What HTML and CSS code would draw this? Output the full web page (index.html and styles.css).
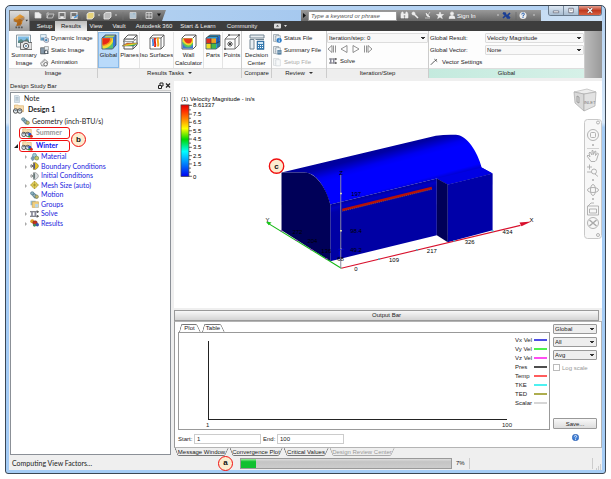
FILE: index.html
```html
<!DOCTYPE html>
<html lang="en">
<head>
<meta charset="utf-8">
<title>Design Study</title>
<link rel="stylesheet" href="styles.css">
</head>
<body>
<svg class="defs" aria-hidden="true">
  <defs>
    <linearGradient id="legend" x1="0" y1="0" x2="0" y2="1"><stop offset="0" stop-color="#e00000"/><stop offset=".08" stop-color="#ff2a00"/><stop offset=".22" stop-color="#ff9a00"/><stop offset=".33" stop-color="#ffff00"/><stop offset=".48" stop-color="#00d800"/><stop offset=".65" stop-color="#00ffff"/><stop offset=".8" stop-color="#0090ff"/><stop offset="1" stop-color="#0000f0"/></linearGradient>
    <linearGradient id="heat" x1="0" y1="0" x2="1" y2="1"><stop offset="0" stop-color="#e02010"/><stop offset=".35" stop-color="#f08a20"/><stop offset=".55" stop-color="#e8e030"/><stop offset=".72" stop-color="#30b860"/><stop offset="1" stop-color="#1848c8"/></linearGradient>
    <linearGradient id="gold" x1="0" y1="0" x2="1" y2="1"><stop offset="0" stop-color="#f7b955"/><stop offset="1" stop-color="#b4610c"/></linearGradient>
    <symbol id="i-global" viewBox="0 0 16 16"><path d="M1 4 4.500 1H15v10l-3.500 4H1z" fill="#3478d8" stroke="#444" stroke-width=".8"/><path d="M1.500 4.200h10.500v10.400H1.500z" fill="#58c070"/><path d="M1.500 4.200h10.500v3c-1 4-5 7-10.500 7.400z" fill="#f2dc30"/><path d="M1.500 4.200h9.500c0 4-4 7-9.500 8z" fill="#f49020"/><path d="M1.500 4.200h7.500c0 4-3 6-7.500 6.500z" fill="#e82818"/><path d="M3 3.500 5 1.500h9l-2 2z" fill="#b9d35a"/></symbol>
    <symbol id="i-planes" viewBox="0 0 16 16"><path d="M2 5 6 1h9v10l-4 4H2zM2 5h9v10M11 5l4-4" fill="none" stroke="#555" stroke-width="1"/><path d="m0 12 5-3h11l-4 3z" fill="url(#heat)" stroke="#555" stroke-width=".5"/><path d="m1 7.500 3-2h10l-3 2z" fill="#f8f8f8" stroke="#666" stroke-width=".6"/></symbol>
    <symbol id="i-iso" viewBox="0 0 16 16"><path d="M1 4 4 1h11v11l-3 3H1zM1 4h11v11M12 4l3-3" fill="#fff" stroke="#555" stroke-width=".9"/><path d="M5 4c-1 3 1 6 0 9h2c1-3-1-6 0-9z" fill="#e02818"/><path d="M8 3.500c-1 3 1 6 0 9h2c1-3-1-6 0-9z" fill="#f0a820"/><path d="M4 5c-1 2 1 4 0 7z" stroke="#2878d8" stroke-width="1"/></symbol>
    <symbol id="i-wall" viewBox="0 0 16 16"><path d="M1 4 4 1h11v11l-3 3H1zM12 4l3-3" fill="#fff" stroke="#444" stroke-width=".9"/><path d="M1.500 4.500H12V14.500H1.500z" fill="#3f78d0"/><path d="M1.500 4.500H12v6q-2 3-5 3-3 0-5.500-4z" fill="#54c464"/><path d="M1.500 4.500H12v4q-2 3-4.500 3t-6-4z" fill="#f2d82c"/><path d="M2.500 4.500H11q0 5-3.500 5t-5-5z" fill="#e8361c"/></symbol>
    <symbol id="i-parts" viewBox="0 0 16 16"><path d="M1 4 5 1h10v11l-4 3H1z" fill="#2c9bd0" stroke="#444" stroke-width=".8"/><path d="M1.400 4.400H6v5H1.400z" fill="#e22c1c"/><path d="M6 4.400h5v5H6z" fill="#f2a020"/><path d="M1.400 9.400H6v5H1.400z" fill="#f0dc28"/><path d="M6 9.400h5v5H6z" fill="#44b848"/><path d="m11 4.400 4-3V8l-4 2z" fill="#2468d0"/><path d="M1 9.400h10l4-2M6 4.400v10M3 2.500h10V13" fill="none" stroke="#333" stroke-width=".6"/></symbol>
    <symbol id="i-points" viewBox="0 0 16 16"><path d="M1 5 5 1h10v10l-4 4H1zM1 5h10v10M11 5l4-4" fill="none" stroke="#666" stroke-width=".9"/><path d="m4 8 4 4m0-4-4 4M6 7v6M3 10h6" stroke="#333" stroke-width=".8"/><circle cx="5" cy="1" r="1" fill="#555"/><circle cx="15" cy="1" r="1" fill="#555"/><circle cx="1" cy="15" r="1" fill="#555"/></symbol>
    <symbol id="i-decision" viewBox="0 0 16 16"><path d="M1 1h14v3H1zM1 5.500h4V15H1zM6.500 5.500H15" fill="#e8eef2" stroke="#738592" stroke-width="1"/><path d="M8 7h7v8.500H8z" fill="#3b7fb4" stroke="#285f8c" stroke-width=".5"/><path d="M9 8h5v2H9z" fill="#cfe6f5"/><path d="M9 11.500h5M9 13.500h5" stroke="#fff" stroke-dasharray="1 1"/></symbol>
    <symbol id="i-picture" viewBox="0 0 16 16"><path d="M.5 1h14v12H.5z" fill="#f2f6f8" stroke="#8a9aa4"/><path d="M2 2.500h11v5H2z" fill="#7fbde6"/><path d="m2 7 3-2 3 2 3-3 2 3v2H2z" fill="#5d8a86"/><path d="M4.500 8.500h2l1-1.500h4l1 1.500H16v7H4.500z" fill="#e4e4e4" stroke="#555" stroke-width=".8"/><circle cx="10" cy="12" r="2.600" fill="#fff" stroke="#555"/><circle cx="10" cy="12" r="1" fill="#5584a8"/></symbol>
    <symbol id="i-dyn" viewBox="0 0 16 16"><path d="M1 1h10v10H1z" fill="#e6f1f8" stroke="#6f8ca0"/><path d="M2 6h5v5H2z" fill="#5c98c2"/><path d="m9 6 6 2v6l-4 1.500L7 13V8z" fill="#d8e2e8" stroke="#557" stroke-width=".9"/><circle cx="11" cy="11" r="2" fill="#4488bb"/></symbol>
    <symbol id="i-static" viewBox="0 0 16 16"><path d="M1 3h9v11H1z" fill="#8598a8" stroke="#444"/><path d="M8 1h7v6H8z" fill="#e4edf2" stroke="#777"/><path d="M7 8h8v6H7z" fill="#4e5a64"/><circle cx="11" cy="11" r="2" fill="#fff"/></symbol>
    <symbol id="i-anim" viewBox="0 0 16 16"><path d="m1 9 7-7 6 5-2 7H3z" fill="#f0f0f0" stroke="#555"/><path d="m3 9 6-5M5 12l7-5" stroke="#777"/><circle cx="10" cy="11" r="3" fill="#fff" stroke="#555" stroke-width="1.300"/></symbol>
    <symbol id="i-file" viewBox="0 0 16 16"><path d="M1 1h9v12H1z" fill="#f6f8f9" stroke="#677782"/><path d="M3 4h5M3 7h5M3 10h4" stroke="#8b9aa5"/><path d="M5 3h8v11H5z" fill="#f0f5f8" stroke="#7a8a95"/></symbol>
    <symbol id="i-status" viewBox="0 0 16 16"><use href="#i-file"/><circle cx="11" cy="11" r="4.500" fill="#2b7cc8"/><path d="M11 8v1.500M11 10.500V14" stroke="#fff" stroke-width="1.500"/></symbol>
    <symbol id="i-summary" viewBox="0 0 16 16"><use href="#i-file"/><path d="M8 7h7v8H8z" fill="#3d6d92"/><path d="M9 9h5M9 12h5" stroke="#fff"/></symbol>
    <symbol id="i-solve" viewBox="0 0 16 12"><path d="M0 2h15M12 0l3 2-3 2M0 10h15M12 8l3 2-3 2" fill="none" stroke="#333" stroke-width="1.400"/><path d="M2 1h3v10H2zM8 1h3v10H8z" fill="#889"/></symbol>
    <symbol id="i-study" viewBox="0 0 16 14"><path d="M2 1h5l1 1h6v8H2z" fill="#f8ddb0" stroke="#d9a860" stroke-width=".8"/><circle cx="3.500" cy="9" r="3" fill="#dfe6ea" stroke="#444" stroke-width="1.200"/><circle cx="9" cy="9" r="3" fill="#dfe6ea" stroke="#444" stroke-width="1.200"/><path d="M2 8h3M7.500 8h3" stroke="#5b6b78" stroke-width="1.300"/></symbol>
    <symbol id="i-scen" viewBox="0 0 16 14"><use href="#i-study"/><circle cx="12" cy="9" r="2.200" fill="#2850c8"/><circle cx="14" cy="11.500" r="2.200" fill="#d82818"/><circle cx="11" cy="12" r="1.500" fill="#30a040"/></symbol>
    <symbol id="i-note" viewBox="0 0 12 14"><path d="M1 0h8l2 2v12H1z" fill="#d8e2ea" stroke="#a5b6c4"/><path d="M3 4h6M3 6.500h6M3 9h6" stroke="#8aa0b2"/></symbol>
    <symbol id="i-geom" viewBox="0 0 16 14"><path d="M1 3q4-3 7 1l5 4v5H8z" fill="#6b95a8"/><circle cx="4" cy="4" r="3" fill="#8cb1bf" stroke="#4a7082"/><circle cx="8" cy="8" r="3" fill="#9bb4bd" stroke="#4a7082"/><circle cx="12" cy="10" r="3" fill="#c0b96d" stroke="#76734e"/></symbol>
    <symbol id="i-material" viewBox="0 0 16 14"><path d="m1 9 3-4 4 1v6l-4 2z" fill="#7a9bb0"/><circle cx="8" cy="4" r="3.500" fill="#a3c9d6" stroke="#4b7c98"/><circle cx="12" cy="9" r="3.500" fill="#c7c66c" stroke="#5b8438"/></symbol>
    <symbol id="i-bc" viewBox="0 0 16 14"><path d="M0 7h5M2 4l3 3-3 3" stroke="#444" fill="none" stroke-width="1.500"/><path d="M6 1h4q5 3 5 6t-5 6H6z" fill="#e8c423" stroke="#7a6b20"/><path d="M6 2h3v10H6z" fill="#558"/></symbol>
    <symbol id="i-ic" viewBox="0 0 16 14"><path d="M0 7h5M2 4l3 3-3 3" stroke="#777" fill="none" stroke-width="1.500"/><path d="M6 1h4q5 3 5 6t-5 6H6z" fill="#dcdfe2" stroke="#777"/><path d="M6 2h3v10H6z" fill="#677"/></symbol>
    <symbol id="i-mesh" viewBox="0 0 16 14"><path d="m8 0 7 7-7 7-7-7z" fill="#f2df62" stroke="#a68c1c"/><path d="M1 7h14M8 0v14M4 3.500l8 7M12 3.500l-8 7" stroke="#8b7a22" stroke-width=".8"/></symbol>
    <symbol id="i-group" viewBox="0 0 16 14"><path d="M1 1h9v8H1z" fill="#8fb9d6"/><path d="M4 3h11v10H4z" fill="#f0cf80" stroke="#c39b48"/><path d="M9 7h6v6H9z" fill="#b9d5e6"/></symbol>
    <symbol id="i-results" viewBox="0 0 16 14"><circle cx="4" cy="4" r="3.500" fill="#da9c28"/><circle cx="9" cy="7" r="4" fill="#c83020" stroke="#702018"/><circle cx="13" cy="10" r="3" fill="#3c55b0"/><circle cx="8" cy="11" r="2.500" fill="#40905a"/></symbol>
    <symbol id="i-help" viewBox="0 0 12 12"><circle cx="6" cy="6" r="5.500" fill="#3f7fd6" stroke="#2a5aa8"/><path d="M4 4.500Q4 2.500 6 2.500t2 2Q8 5.500 6 6.500v1M6 8.500V10" fill="none" stroke="#fff" stroke-width="1.400"/></symbol>
  </defs>
</svg>

<div class="window">
  <header class="top">
    <button class="app" aria-label="Application menu"><svg viewBox="0 0 21 20"><path d="m4 7 7-5 5 3-5 2 3 2-1 4-6 2 1-4-3-1z" fill="url(#gold)"/><path d="m4 7 4 1 3-1 5-2v3l-4 2v5l-5 0 1-4-4-1z" fill="#8d4708" opacity=".5"/><path d="M17 8h3l-1.500 2z" fill="#333"/><path d="M6 16.500h8" stroke="#555" stroke-width="2" stroke-dasharray="2 1"/></svg></button>
    <div class="topmain">
      <div class="title">
        <div class="qat">
          <svg viewBox="0 0 132 11">
            <g fill="#eee" stroke="#ddd" stroke-width=".7"><path d="M5 2.500h4l2 2V8H5z"/><path d="m17 8 1.500-4H24l-1.500 4zM17 8V3h2" fill="none"/><path d="M29 2.500h6V8.500h-6z" fill="none" stroke-width="1.200"/><path d="M30.500 6.500h3v2h-3z"/><path d="M41 2.500h6V8.500h-6z" fill="none" stroke-width="1.200"/><path d="M42 6.500h3v2h-3z"/></g>
            <path d="m44 8 4-3" stroke="#52a0e8" stroke-width="1.500"/>
            <path d="m57 4 2-1.500h5v4.500l-2 2h-5z" fill="#e6d27a" stroke="#eee" stroke-width=".8"/><path d="m74 4 2-1.500h5v4.500l-2 2h-5z" fill="#bbb" stroke="#eee" stroke-width=".8"/>
            <path d="M68 5h2M85 5h2" stroke="#ccc"/><path d="M52 2v8M93 2v8M111 2v8" stroke="#777" stroke-width=".6"/>
            <path d="M100 2.500h6v6h-6zM102 2.500v6M104 4.500v4" fill="#9db9cc" stroke="#ddd" stroke-width=".7"/><path d="M116 2.500h6v6h-6zM116 5h6M119 2.500v6" fill="#777" stroke="#ddd" stroke-width=".8"/><path d="M127 3.500h4l-2 3z" fill="#111"/>
          </svg>
        </div>
        <div class="glass"></div>
        <div class="info">
          <svg class="play" viewBox="0 0 7 11"><path d="m2 3 3 2.500L2 8z" fill="#111"/></svg>
          <input type="text" aria-label="Search help" placeholder="Type a keyword or phrase">
          <svg class="infoicons" viewBox="0 0 57 11"><g fill="#eee" stroke="#eee" stroke-width=".6"><path d="M2 8V4l1-2h1l1 6zM6 8l1-6h1l1 2v4zM4 4h3v1H4z"/><path d="m14 3 5 5" stroke-width="1.500"/><circle cx="14.500" cy="3.500" r="1.500"/><path d="M26 8h5M27 3q0 4 4 4zM29 5l2-3"/><path d="m41 2 1 2.500h2.500l-2 1.500.8 2.500L41 7l-2.300 1.500.8-2.500-2-1.500H40z"/><circle cx="53" cy="3.500" r="1.600"/><path d="M50 8.500q0-3 3-3t3 3z"/></g></svg>
          <button class="sign">Sign In</button>
          <svg class="infoend" viewBox="0 0 44 11"><path d="M3 5h2M39 5h2" stroke="#ccc"/><path d="m9 3 2.500 2.500L9 8M16 3l-2.500 2.500L16 8M9 3h2l2.500 5H16" fill="none" stroke="#1b3f94" stroke-width="1.600"/><path d="M22 2v8" stroke="#666" stroke-width=".7"/><circle cx="29" cy="5.500" r="3.500" fill="#eee"/><path d="M27.800 4.500q0-1.500 1.300-1.500t1.200 1.300-1.300 1.200V6.500M29 7v1" fill="none" stroke="#245fae" stroke-width="1"/></svg>
        </div>
      </div>
      <nav class="tabs">
        <a class="t1" href="#">Setup</a><a class="t2 active" href="#">Results</a><a class="t3" href="#">View</a><a class="t4" href="#">Vault</a><a class="t5" href="#">Autodesk 360</a><a class="t6" href="#">Start &amp; Learn</a><a class="t7" href="#">Community</a>
        <svg class="tabicon" viewBox="0 0 14 8"><rect x="0" y="1.500" width="7" height="5" rx="1" fill="#ddd"/><path d="M2 4.500h3L3.500 3z" fill="#333"/><path d="M10 3h3l-1.500 2z" fill="#ddd"/></svg>
      </nav>
    </div>
    <div class="winbtns">
      <button aria-label="Minimize"><svg viewBox="0 0 12 10"><path d="M3 5.500h6v2H3z" fill="#fff" stroke="#556" stroke-width=".7"/></svg></button><button aria-label="Maximize"><svg viewBox="0 0 12 10"><path d="M3.500 2.500h5v5h-5zM5 4.500h2" fill="#fff" stroke="#556" stroke-width=".8"/></svg></button><button class="close" aria-label="Close"><svg viewBox="0 0 20 10"><path d="m7.500 2.500 5 5m0-5-5 5" stroke="#633" stroke-width="2.600"/><path d="m7.500 2.500 5 5m0-5-5 5" stroke="#fff" stroke-width="1.400"/></svg></button>
    </div>
  </header>

  <div class="ribbon">
    <section class="panel">
      <div class="pbody">
        <button class="big b-sum"><svg><use href="#i-picture"/></svg>Summary<br>Image</button>
        <div class="stack"><button><svg><use href="#i-dyn"/></svg>Dynamic Image</button><button><svg><use href="#i-static"/></svg>Static Image</button><button><svg><use href="#i-anim"/></svg>Animation</button></div>
      </div>
      <h2>Image</h2>
    </section>
    <section class="panel">
      <div class="pbody tasks">
        <button class="big on"><svg><use href="#i-global"/></svg>Global</button>
        <button class="big"><svg><use href="#i-planes"/></svg>Planes</button>
        <button class="big"><svg><use href="#i-iso"/></svg>Iso Surfaces</button>
        <button class="big"><svg><use href="#i-wall"/></svg>Wall<br>Calculator</button>
        <button class="big"><svg><use href="#i-parts"/></svg>Parts</button>
        <button class="big"><svg><use href="#i-points"/></svg>Points</button>
      </div>
      <h2 class="more">Results Tasks</h2>
    </section>
    <section class="panel">
      <div class="pbody"><button class="big fill"><svg><use href="#i-decision"/></svg>Decision<br>Center</button></div>
      <h2>Compare</h2>
    </section>
    <section class="panel">
      <div class="pbody"><div class="stack"><button><svg><use href="#i-status"/></svg>Status File</button><button><svg><use href="#i-summary"/></svg>Summary File</button><button disabled><svg><use href="#i-file"/></svg>Setup File</button></div></div>
      <h2 class="more">Review</h2>
    </section>
    <section class="panel">
      <div class="pbody iter">
        <select aria-label="Iteration/step"><option>Iteration/step: 0</option></select>
        <div class="steps">
          <button aria-label="First"><svg viewBox="0 0 10 8"><path d="M5 .5v7L1 4zM6.500.5v7M8.500.5v7" /></svg></button><button aria-label="Previous"><svg viewBox="0 0 10 8"><path d="M8 .5v7L2 4z"/></svg></button><button aria-label="Next"><svg viewBox="0 0 10 8"><path d="M2 .5v7L8 4z"/></svg></button><button aria-label="Last"><svg viewBox="0 0 10 8"><path d="M5 .5v7L9 4zM3.500.5v7M1.500.5v7"/></svg></button>
        </div>
        <button class="solve"><svg><use href="#i-solve"/></svg>Solve</button>
      </div>
      <h2>Iteration/Step</h2>
    </section>
    <section class="panel">
      <div class="pbody glob">
        <label for="gr">Global Result:</label><select id="gr"><option>Velocity Magnitude</option></select>
        <label for="gv">Global Vector:</label><select id="gv"><option>None</option></select>
        <button class="vset"><svg viewBox="0 0 10 9"><path d="m1 8 5-5M5.500 1 9 4M6 3.500 8.500 1" stroke="#555" stroke-width="1.200"/></svg>Vector Settings</button>
      </div>
      <h2 class="mint">Global</h2>
    </section>
    <div class="ribend"></div>
  </div>

  <main class="work">
    <aside class="side">
      <div class="dockhead"><span>Design Study Bar</span><svg viewBox="0 0 14 7"><path d="M1.500 3.500h3v3h-3zM3 3V1h3v3H5" fill="none" stroke="#222" stroke-width="1"/><path d="m9 1.500 4 4m0-4-4 4" stroke="#222" stroke-width="1.200"/></svg></div>
      <div class="tree">
        <div class="row note"><svg><use href="#i-note"/></svg>Note</div>
        <div class="row design"><svg><use href="#i-study"/></svg>Design 1</div>
        <div class="row geom"><svg><use href="#i-geom"/></svg>Geometry (inch-BTU/s)</div>
        <div class="row scen off"><span class="box"><svg><use href="#i-scen"/></svg>Summer</span></div>
        <div class="row scen"><i class="open"></i><span class="box"><svg><use href="#i-scen"/></svg>Winter</span></div>
        <ul>
          <li class="exp"><svg><use href="#i-material"/></svg>Material</li>
          <li class="exp"><svg><use href="#i-bc"/></svg>Boundary Conditions</li>
          <li><svg><use href="#i-ic"/></svg>Initial Conditions</li>
          <li class="exp"><svg><use href="#i-mesh"/></svg>Mesh Size (auto)</li>
          <li><svg><use href="#i-geom"/></svg>Motion</li>
          <li><svg><use href="#i-group"/></svg>Groups</li>
          <li class="exp"><svg><use href="#i-solve"/></svg>Solve</li>
          <li class="exp"><svg><use href="#i-results"/></svg>Results</li>
        </ul>
        <span class="badge b">b</span>
      </div>
    </aside>

    <div class="right">
      <div class="view">
        <svg class="scene" viewBox="174 81 428 228" preserveAspectRatio="xMinYMin meet">
          <defs>
            <linearGradient id="roof" gradientUnits="userSpaceOnUse" x1="360" y1="154" x2="372" y2="199"><stop offset="0" stop-color="#00009a"/><stop offset=".1" stop-color="#0000a4"/><stop offset=".3" stop-color="#0000f0"/><stop offset=".4" stop-color="#0000ff"/><stop offset=".87" stop-color="#0000ff"/><stop offset="1" stop-color="#0000c0"/></linearGradient>
            <linearGradient id="wallg" gradientUnits="userSpaceOnUse" x1="385" y1="190" x2="389" y2="206"><stop offset="0" stop-color="#000088"/><stop offset=".35" stop-color="#0000c4"/><stop offset=".6" stop-color="#0000a8"/><stop offset="1" stop-color="#0000a4"/></linearGradient>
          </defs>
          <text x="181" y="101" class="s6">(1) Velocity Magnitude - in/s</text>
          <rect x="181" y="105" width="8" height="72" fill="url(#legend)" stroke="#444" stroke-width=".7"/>
          <path d="M189 105.500h3M189 110h2M189 114.300h3M189 118.400h2M189 122.500h3M189 126.700h2M189 131h3M189 135h2M189 139.300h3M189 143.400h2M189 147.600h3M189 151.800h2M189 156h3M189 160h2M189 164.300h3M189 168.500h2M189 172.600h2M189 176.700h3" stroke="#222" stroke-width=".7"/>
          <g class="s6"><text x="193" y="107.500">8.61337</text><text x="193" y="116.500">7.5</text><text x="193" y="124.700">6.5</text><text x="193" y="133.200">5.5</text><text x="193" y="141.500">4.5</text><text x="193" y="149.800">3.5</text><text x="193" y="158.200">2.5</text><text x="193" y="166.500">1.5</text><text x="193" y="179">0</text></g>
          <path d="M282 173 437 136Q447 134.500 457 135C468 135 479 152 483 168L494 174 449 185 438 179 331 205C326 188 317 173 305 173Z" fill="url(#roof)"/>
          <path d="m438 179 45-11 11 6-45 11z" fill="#0000e4"/>
          <path d="m331 205 107-26v57l-107 26z" fill="url(#wallg)"/>
          <path d="M282 173h24c11 1 21 16 25 32v57l-49-31z" fill="#000058"/>
          <path d="m438 179 11 6v58l-11-7z" fill="#000058"/>
          <path d="m449 185 45-11v57l-45 12z" fill="#0000a8"/>
          <path d="m343 210.500 90-22" stroke="#b81008" stroke-width="2.600"/><path d="m343 211.800 90-22" stroke="#776a4a" stroke-width=".7" stroke-dasharray="1 1"/>
          <path d="m342 269 180-43" stroke="#d8102c" stroke-width="1.100"/><path d="m533 222-12 1 2 4z" fill="#d8102c"/>
          <path d="m342 269-75-46" stroke="#14b814" stroke-width="1.100"/><path d="m267 222 5 1-3 3z" fill="#14c814"/>
          <path d="M341.500 175v94" stroke="#8888a0" stroke-width="1"/>
          <path d="M341 194h1.500M341 231.500h1.500M341 250h1.500" stroke="#ffffb0" stroke-width="1.500"/>
          <path d="M339 250h6M340 252v5" stroke="#0000d0" stroke-width="1"/>
          <path d="M379 260h2M417 250.700h2M454.500 241.500h2M493 231.500h2" stroke="#20c8d8" stroke-width="1.200"/><path d="M281 231.500h2M296 241h2M311 250.300h2M326 259.500h2" stroke="#9030c0" stroke-width="1.200"/>
          <g class="s6"><text x="390" y="262.500">109</text><text x="428" y="253.500">217</text><text x="466" y="244.500">326</text><text x="504" y="235">434</text><text x="355" y="272">0</text><text x="352" y="196.500">197</text><text x="351" y="234">98.4</text><text x="351" y="253">49.2</text><text x="293" y="234.500">272</text><text x="308" y="244">204</text><text x="322" y="253.500">136</text><text x="338" y="262">68</text><text x="531" y="223">X</text><text x="266" y="223">Y</text><text x="340" y="175">Z</text></g>
          <circle cx="277" cy="166.500" r="7.200" fill="#fdeccf" stroke="#f01010" stroke-width="1.400"/><text x="277" y="169.500" class="callout">c</text>
        </svg>
        <svg class="viewcube" viewBox="0 0 24 24"><path d="m1 4 13-3 9 3-12 2z" fill="#ededed" stroke="#b8b8b8" stroke-width=".7"/><path d="m1 4 10 2v17L2 15z" fill="#d9d9d9" stroke="#aaa" stroke-width=".7"/><path d="m11 6 12-2-1 14-11 5z" fill="#e2e2e2" stroke="#aaa" stroke-width=".7"/><path d="m4 8 2 1v6l-2-1z" fill="none" stroke="#888" stroke-width=".7"/><text x="11" y="16">INLET</text></svg>
        <svg class="navbar" viewBox="0 0 18 120"><rect x=".5" y=".5" width="17" height="119" rx="3" fill="#f7f7f7" stroke="#c8c8c8"/><g fill="none" stroke="#aaa" stroke-width=".9"><circle cx="14" cy="3.500" r="1.500"/><circle cx="14" cy="116" r="1.500"/><circle cx="9" cy="16" r="5.500"/><rect x="6.500" y="13.500" width="5" height="5" rx="1"/><path d="M3 29.500h12" stroke="#ccc"/><path d="M6 41 3 37l1-1 2 2-1-4 1-1 2 3V31.500h1l.5 4L11 32l1 .5-.5 4L13.500 34l1 .7-2 6.300-1.500 1.500H7zM3 48h5M5.500 45.500v5M3 53h5M11 55l3 2.500"/><circle cx="10" cy="52.500" r="2.500"/><ellipse cx="9" cy="71" rx="5.500" ry="2.500"/><ellipse cx="9" cy="71" rx="2.500" ry="5.500"/><path d="M3.500 87h11v9h-11zM5.500 90h7v4h-7zM4 87l3-3h3"/><circle cx="9" cy="104" r="5.500"/><path d="m5.500 101 7 6m0-6-7 6" stroke-width="1.600"/></g><path d="M8 26h2M8 61h2M8 80h2" stroke="#888"/></svg>
      </div>

      <div class="outbar">Output Bar</div>
      <div class="output">
        <div class="outmain">
          <div class="ptabs"><button class="p1">Plot</button><button class="p2">Table</button></div>
          <div class="plot">
            <div class="chart"><div class="axes"></div><div class="xlab"><span>1</span><span>100</span></div></div>
            <ul class="keys"><li class="k1">Vx Vel</li><li class="k2">Vy Vel</li><li class="k3">Vz Vel</li><li class="k4">Pres</li><li class="k5">Temp</li><li class="k6">TKE</li><li class="k7">TED</li><li class="k8">Scalar</li></ul>
          </div>
          <div class="range"><label for="st">Start:</label><input id="st" type="text" value="1"><label for="en">End:</label><input id="en" type="text" value="100"></div>
        </div>
        <div class="opts">
          <select aria-label="Scope"><option>Global</option></select>
          <select aria-label="Quantity"><option>All</option></select>
          <select aria-label="Statistic"><option>Avg</option></select>
          <label class="log"><input type="checkbox" disabled>Log scale</label>
          <button class="save">Save...</button>
          <button class="help" aria-label="Help"><svg><use href="#i-help"/></svg></button>
        </div>
      </div>
      <div class="btabs"><button class="m1">Message Window</button><button class="m2 cur">Convergence Plot</button><button class="m3">Critical Values</button><button class="m4" disabled>Design Review Center</button></div>
    </div>
  </main>

  <footer class="status">
    <span class="msg">Computing View Factors...</span>
    <span class="badge">a</span>
    <progress value="7" max="100" aria-label="Progress"></progress>
    <span class="pct">7%</span><span class="cell"></span><span class="cell last"></span>
    <svg class="grip" viewBox="0 0 6 6"><path d="M4 1h1M4 3h1M4 5h1M2 3h1M2 5h1M0 5h1" stroke="#aaa"/></svg>
  </footer>
</div>
</body>
</html>
```
FILE: styles.css
```css
* { box-sizing: border-box; }
html, body { height: 100%; }
body { margin: 0; padding: 5px; background: #fff; color: #222; font: 6px/8px "Liberation Sans", Arial, sans-serif; }
button, select, input { font: inherit; color: inherit; margin: 0; padding: 0; border: 0; background: none; }
button { white-space: nowrap; }
ul { list-style: none; margin: 0; padding: 0; }
h2 { margin: 0; font: inherit; }
svg { display: block; flex: none; }
.defs { position: absolute; width: 0; height: 0; }

select {
  appearance: none; height: 10px; padding: 0 8px 0 1px; border: 1px solid #ddd; border-radius: 1px;
  background: linear-gradient(to top right, transparent 50%, #333 50%) right 4px center / 2px 3px no-repeat, linear-gradient(to top left, transparent 50%, #333 50%) right 2px center / 2px 3px no-repeat, #f8f8f8;
}

.window { position: relative; display: flex; flex-direction: column; height: 100%; min-height: 440px; padding: 4px 3px 3px; border: 1px solid #3b4754; border-radius: 5px 5px 3px 3px; background: linear-gradient(#b4d2f2, #d8e9fa 25%, #a5ccf5 26%, #a5ccf5); overflow: hidden; }

.top { display: flex; flex: none; }
.app { width: 21px; height: 21px; border: 1px solid #777; border-bottom: 0; background: linear-gradient(#ddd, #999); }
.app svg { width: 19px; height: 19px; }
.topmain { flex: 1; min-width: 0; }
.title { display: flex; height: 11px; background: linear-gradient(100deg, #b9d5f1, #a5c8ef 50%, #d0e2f5); }
.qat { width: 136px; background: linear-gradient(#8b8b8b, #555); clip-path: polygon(0 0, 100% 0, 132px 100%, 0 100%); }
.qat svg { width: 132px; height: 11px; }
.glass { flex: 1; }
.info { display: flex; align-items: center; width: 240px; margin-right: 61px; background: linear-gradient(#999, #686868); color: #fff; }
.play { width: 7px; height: 11px; }
.info input { width: 89px; height: 10px; padding-left: 2px; background: #fff; border: 1px solid #999; color: #333; font-style: italic; }
.info input::placeholder { color: #555; opacity: 1; }
.infoicons { width: 57px; height: 11px; margin-left: 2px; }
.sign { width: 38px; text-align: left; padding-left: 1px; }
.infoend { width: 44px; height: 11px; }
.tabs { display: flex; align-items: stretch; height: 10px; padding-left: 4px; background: #3d3d3d; line-height: 10px; }
.tabs a { color: #eee; text-decoration: none; text-align: center; white-space: nowrap; }
.tabs .active { background: linear-gradient(#bbb, #eee); color: #111; }
.t1 { width: 21px; } .t2 { width: 32px; } .t3 { width: 18px; } .t4 { width: 28px; } .t5 { width: 42px; } .t6 { width: 46px; } .t7 { width: 42px; }
.tabicon { width: 14px; height: 8px; margin: 1px 0 0 11px; }
.winbtns { position: absolute; top: 0; right: 3px; display: flex; height: 10px; border: 1px solid #68798c; border-top: 0; border-radius: 0 0 3px 3px; overflow: hidden; }
.winbtns button { width: 15px; background: linear-gradient(#dce7f2, #a9bdd2); border-right: 1px solid #78899c; }
.winbtns .close { width: 22px; border: 0; background: linear-gradient(#e6a090, #c03a20 50%, #d86040); }
.winbtns svg { width: 100%; height: 9px; }

.ribbon { display: grid; grid-template-columns: 89px 144px 30px 55px 102px 1fr 17px; grid-template-rows: 47px; flex: none; background: #fdfdfd; }
.panel { display: flex; flex-direction: column; min-width: 0; border-right: 1px solid #ccc; }
.panel h2 { flex: none; height: 10px; line-height: 8px; text-align: center; background: #eee; border-top: 1px solid #ddd; }
.panel .mint { background: linear-gradient(90deg, #c4eade, #d6f1e8); }
.more::after { content: ""; display: inline-block; margin-left: 4px; border: 2px solid transparent; border-top-color: #333; border-bottom: 0; vertical-align: 1px; }
.pbody { display: flex; flex: 1; min-height: 0; padding-top: 1px; }
.big { display: flex; flex-direction: column; align-items: center; line-height: 8px; }
.big svg { width: 16px; height: 16px; margin: 2px 0 1px; }
.big.on { background: #b9dafa; box-shadow: inset 0 0 0 1px #86b8e8; }
.b-sum { width: 30px; }
.fill { width: 100%; }
.tasks { display: grid; grid-template-columns: 21px 20px 34px 30px 19px 1fr; }
.tasks .big + .big { border-left: 1px solid #e4e4e4; }
.stack { display: flex; flex-direction: column; padding-left: 1px; }
.stack button, .solve, .vset { display: flex; align-items: center; gap: 2px; height: 12px; }
.stack svg { width: 9px; height: 9px; }
.stack button:disabled { color: #aaa; }
.stack button:disabled svg { opacity: .4; }
.iter { flex-direction: column; padding-top: 2px; }
.iter select { flex: none; }
.steps { display: flex; flex: none; gap: 2px; height: 12px; align-items: center; }
.steps svg { width: 10px; height: 8px; fill: none; stroke: #666; stroke-width: .7; }
.solve { gap: 3px; padding-left: 2px; }
.solve svg { width: 8px; height: 6px; }
.glob { display: grid; grid-template-columns: 55px 1fr; grid-template-rows: 12px 12px 12px; align-items: center; padding-left: 1px; }
.vset { gap: 4px; }
.vset svg { width: 8px; height: 8px; }
.ribend { background: linear-gradient(90deg, #bbb, #999); }

.work { display: flex; flex: 1; min-height: 0; background: #efefef; }
.side { display: flex; flex-direction: column; width: 162px; padding: 3px 0 1px 1px; }
.dockhead { display: flex; justify-content: space-between; align-items: center; flex: none; height: 10px; border-bottom: 1px solid #ccc; }
.dockhead svg { width: 14px; height: 7px; }
.tree { position: relative; flex: 1; margin-top: 1px; padding-top: 1px; border: 1px solid #8b9097; background: #fff; font: 7px/9px Lato, sans-serif; }
.row { display: flex; align-items: center; gap: 3px; }
.note { height: 9px; padding-left: 3px; gap: 4px; }
.note svg { width: 6px; height: 8px; }
.design { height: 13px; padding-left: 2px; font-weight: bold; }
.design svg { width: 12px; height: 11px; }
.geom { height: 10px; padding-left: 10px; gap: 2px; }
.geom svg, li svg { width: 9px; height: 8px; }
.scen { height: 13px; position: relative; padding-left: 8px; font-weight: bold; color: #11e; }
.scen.off { color: #999; }
.box { display: flex; align-items: center; gap: 3px; width: 51px; height: 12px; padding-left: 1px; border: 1px solid #f01010; border-radius: 3px; }
.box svg { width: 12px; height: 10px; }
.open { position: absolute; left: 3px; top: 5px; border: 2px solid transparent; border-right-color: #222; border-bottom-color: #222; }
.tree ul { display: grid; grid-auto-rows: 1fr; height: 76px; color: #2323dd; }
.tree li { position: relative; display: flex; align-items: center; gap: 2px; padding-left: 19px; }
.exp::before { content: ""; position: absolute; left: 14px; top: 3px; border: 2px solid transparent; border-left-color: #aaa; border-right: 0; }
.badge { display: flex; align-items: center; justify-content: center; flex: none; width: 15px; height: 15px; border: 1px solid #f01010; border-radius: 50%; background: #fdeccf; color: #111; font: bold 8px/10px "Liberation Sans", sans-serif; }
.badge.b { position: absolute; left: 60px; top: 39px; }

.right { display: flex; flex-direction: column; flex: 1; min-width: 0; margin-left: 3px; }
.view { position: relative; flex: 1; min-height: 0; border-top: 3px solid #efefef; background: #fff; overflow: hidden; }
.scene { width: 100%; height: 100%; }
.s6 { font-size: 6px; fill: #000; }
.callout { font: bold 8px "Liberation Sans", sans-serif; text-anchor: middle; fill: #111; }
.viewcube { position: absolute; top: 7px; right: 5px; width: 24px; height: 24px; }
.viewcube text { font-size: 4px; fill: #777; }
.navbar { position: absolute; top: 38px; right: 0; width: 18px; height: 120px; }
.outbar { flex: none; height: 11px; margin: 2px 3px 0 0; border: 1px solid #999; background: linear-gradient(#f8f8f8, #d4d4d4); text-align: center; line-height: 9px; }
.output { display: flex; flex: none; gap: 3px; height: 127px; padding: 2px 4px 0 3px; background: #fff; border: 1px solid #b4b4b4; border-left-color: #999; }
.outmain { display: flex; flex-direction: column; flex: 1; }
.ptabs { display: flex; height: 8px; }
.ptabs button, .btabs button { position: relative; height: 8px; line-height: 7px; color: #222; }
.ptabs button::before, .ptabs button::after, .btabs button::before, .btabs button::after { content: ""; position: absolute; top: 0; bottom: 0; width: 60%; border: 1px solid #777; }
.ptabs button::before { left: 2px; border-width: 1px 0 0 1px; border-radius: 2px 0 0; transform: skewX(-15deg); }
.ptabs button::after { right: 2px; border-width: 1px 1px 0 0; border-radius: 0 2px 0 0; transform: skewX(25deg); }
.p1 { width: 23px; } .p2 { width: 24px; }
.plot { position: relative; display: flex; height: 99px; padding: 8px 2px 0 29px; border: 1px solid #999; }
.chart { flex: 1; }
.axes { height: 79px; border-left: 1px solid #222; border-bottom: 1px solid #222; }
.xlab { display: flex; justify-content: space-between; margin: 1px -5px 0 -2px; }
.keys { width: 32px; margin: -6px 0 0 8px; color: #222; }
.keys li { display: flex; align-items: center; justify-content: space-between; height: 9px; white-space: nowrap; }
.keys li::after { content: ""; width: 13px; height: 2px; background: currentColor; opacity: .8; }
.keys .k1::after { color: #2222dd; } .keys .k2::after { color: #22ee22; } .keys .k3::after { color: #ff22ee; } .keys .k4::after { color: #222; } .keys .k5::after { color: #f33; } .keys .k6::after { color: #2ee; } .keys .k7::after { color: #992; } .keys .k8::after { color: #ccc; }
.range { display: flex; align-items: center; height: 17px; }
.range label { width: 16px; }
.range input { width: 67px; height: 10px; padding-left: 2px; border: 1px solid #ccc; margin-right: 2px; }
.range label + input + label { width: 14px; }
.opts { display: flex; flex-direction: column; gap: 3px; width: 44px; }
.opts select { border-color: #999; background-color: #eee; }
.log { display: flex; align-items: center; gap: 2px; height: 9px; color: #999; }
.log input { appearance: none; width: 7px; height: 7px; border: 1px solid #bbb; background: #fff; }
.save { height: 11px; margin-top: auto; border: 1px solid #999; border-radius: 1px; background: linear-gradient(#f8f8f8, #ddd); }
.help { align-self: center; width: 7px; height: 7px; margin: 2px 0 6px; }
.help svg { width: 7px; height: 7px; }
.btabs { display: flex; flex: none; height: 8px; }
.btabs button::before { left: 2px; border-width: 0 0 1px 1px; border-radius: 0 0 0 2px; transform: skewX(20deg); }
.btabs button::after { right: 2px; border-width: 0 1px 1px 0; border-radius: 0 0 2px; transform: skewX(-25deg); }
.btabs button:disabled { color: #999; }
.btabs button:disabled::before, .btabs button:disabled::after { border-color: #aaa; }
.m1 { width: 55px; } .m2 { width: 54px; } .m3 { width: 46px; } .m4 { width: 66px; }

.status { display: flex; align-items: center; flex: none; height: 14px; background: #efefef; }
.msg { flex: none; width: 209px; padding-left: 3px; font: 7px/9px Lato, sans-serif; }
.status progress { appearance: none; width: 212px; height: 11px; margin-left: 7px; border: 1px solid #999; background: #c8c8c8; }
.status progress::-webkit-progress-bar { background: linear-gradient(#ddd, #c4c4c4 30%, #ccc); }
.status progress::-webkit-progress-value { background: linear-gradient(#9e9, #10c030 30%, #10c030); }
.pct { width: 13px; margin-left: 4px; }
.cell { flex: 1; height: 11px; border-left: 1px solid #ccc; }
.cell.last { flex: none; width: 4px; }
.grip { align-self: flex-end; width: 6px; height: 6px; }
```
